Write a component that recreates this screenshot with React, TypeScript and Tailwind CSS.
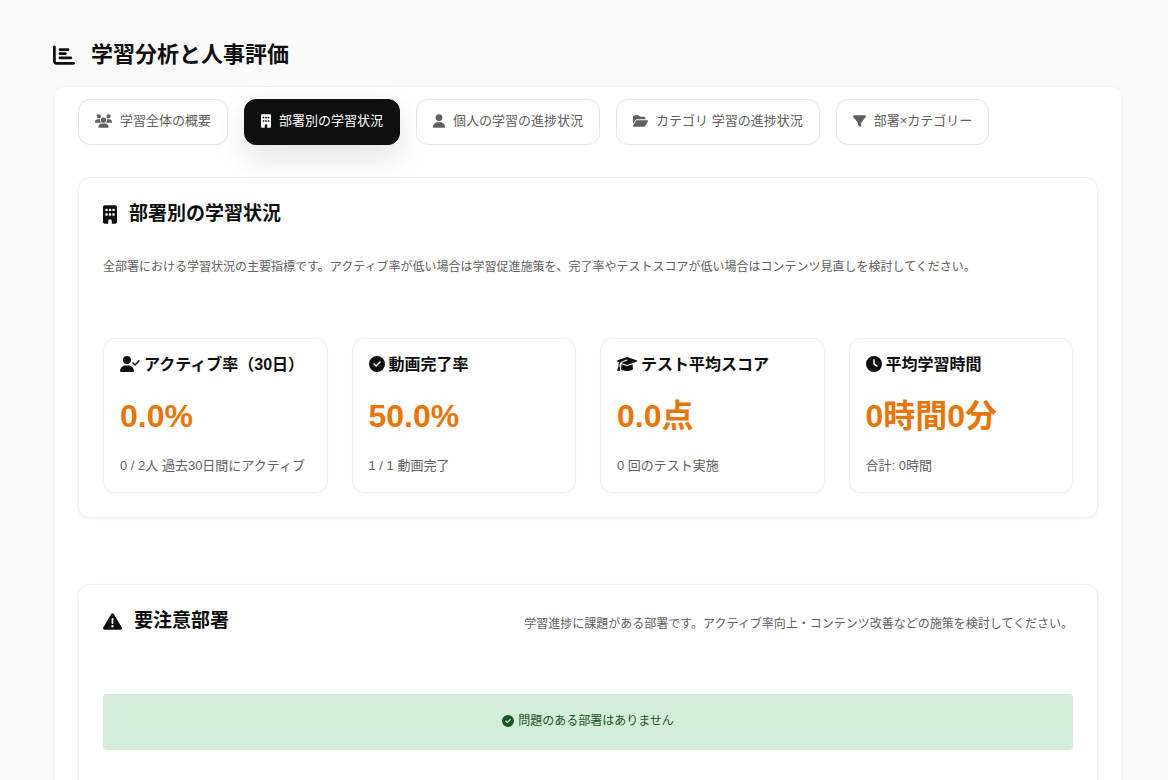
import React, { useState } from "react";
import type { IconType } from "react-icons";
import {
  FaBuilding,
  FaChartBar,
  FaCircleCheck,
  FaClock,
  FaFilter,
  FaFolderOpen,
  FaGraduationCap,
  FaTriangleExclamation,
  FaUser,
  FaUserCheck,
  FaUsers,
} from "react-icons/fa6";

interface Tab {
  id: string;
  label: string;
  icon: IconType;
  iconWidth: string;
}

interface Stat {
  title: string;
  value: string;
  note: string;
  icon: IconType;
  iconWidth: string;
}

const tabs: Tab[] = [
  { id: "overview", label: "学習全体の概要", icon: FaUsers, iconWidth: "w-[17px]" },
  { id: "department", label: "部署別の学習状況", icon: FaBuilding, iconWidth: "w-[10px]" },
  { id: "personal", label: "個人の学習の進捗状況", icon: FaUser, iconWidth: "w-3" },
  { id: "category", label: "カテゴリ 学習の進捗状況", icon: FaFolderOpen, iconWidth: "w-[15px]" },
  { id: "cross", label: "部署×カテゴリー", icon: FaFilter, iconWidth: "w-[13px]" },
];

const stats: Stat[] = [
  {
    title: "アクティブ率（30日）",
    value: "0.0%",
    note: "0 / 2人 過去30日間にアクティブ",
    icon: FaUserCheck,
    iconWidth: "w-5",
  },
  { title: "動画完了率", value: "50.0%", note: "1 / 1 動画完了", icon: FaCircleCheck, iconWidth: "w-4" },
  { title: "テスト平均スコア", value: "0.0点", note: "0 回のテスト実施", icon: FaGraduationCap, iconWidth: "w-5" },
  { title: "平均学習時間", value: "0時間0分", note: "合計: 0時間", icon: FaClock, iconWidth: "w-4" },
];

const StatCard: React.FC<Stat> = ({ title, value, note, icon: Icon, iconWidth }) => (
  <div className="rounded-xl border border-[#f0f0f0] bg-white p-4 shadow-[0_1px_2px_rgba(0,0,0,0.04)]">
    <h3 className="flex items-start gap-1 whitespace-nowrap text-base leading-5 font-bold">
      <Icon className={`mt-px h-4 shrink-0 ${iconWidth}`} />
      {title}
    </h3>
    <p className="mt-4 text-[32px] leading-[50px] font-bold text-[#e8750a]">{value}</p>
    <p className="mt-[15px] whitespace-nowrap text-[13px] leading-5 text-[#606060]">{note}</p>
  </div>
);

const App: React.FC = () => {
  const [active, setActive] = useState("department");

  return (
    <div
      lang="ja"
      className="min-h-screen bg-[#f9f9f9] pt-10 pr-[45px] pl-[53px] font-['Liberation_Sans','Noto_Sans_CJK_JP',sans-serif] text-[#0f0f0f]"
    >
      <h1 className="flex items-center gap-4 text-[22px] leading-[30px] font-bold">
        <FaChartBar className="size-[22px]" />
        学習分析と人事評価
      </h1>

      <main className="mt-4 rounded-xl border border-[#f0f0f0] bg-white px-6 pt-3 pb-6">
        <nav className="flex flex-wrap gap-4">
          {tabs.map(({ id, label, icon: Icon, iconWidth }) => (
            <button
              key={id}
              type="button"
              onClick={() => setActive(id)}
              className={`flex h-[46px] items-center gap-2 rounded-xl border px-4 pb-0.5 text-[13px] whitespace-nowrap ${
                active === id
                  ? "border-[#0f0f0f] bg-[#0f0f0f] text-white shadow-[0_12px_32px_rgba(15,15,15,0.12)]"
                  : "border-[#e5e5e5] bg-white text-[#606060]"
              }`}
            >
              <Icon className={`h-3.5 ${iconWidth}`} />
              {label}
            </button>
          ))}
        </nav>

        <section className="mt-8 rounded-xl border border-[#f0f0f0] bg-white p-6 shadow-[0_1px_3px_rgba(0,0,0,0.06)]">
          <h2 className="flex items-center gap-3 text-[19px] leading-6 font-bold">
            <FaBuilding className="h-[19px] w-3.5" />
            部署別の学習状況
          </h2>
          <p className="mt-8 text-xs leading-[18px] text-[#606060]">
            全部署における学習状況の主要指標です。アクティブ率が低い場合は学習促進施策を、完了率やテストスコアが低い場合はコンテンツ見直しを検討してください。
          </p>
          <div className="mt-[62px] grid grid-cols-4 gap-6">
            {stats.map((stat) => (
              <StatCard key={stat.title} {...stat} />
            ))}
          </div>
        </section>

        <section className="mt-[66px] rounded-xl border border-[#f0f0f0] bg-white p-6 shadow-[0_1px_3px_rgba(0,0,0,0.06)]">
          <div className="flex items-start justify-between">
            <h2 className="flex items-center gap-3 text-[19px] leading-6 font-bold">
              <FaTriangleExclamation className="size-[19px]" />
              要注意部署
            </h2>
            <p className="text-xs leading-[30px] text-[#606060]">
              学習進捗に課題がある部署です。アクティブ率向上・コンテンツ改善などの施策を検討してください。
            </p>
          </div>
          <div
            role="status"
            className="mt-[55px] mb-8 flex h-14 items-center justify-center gap-1 rounded-sm bg-[#d4edda] pb-0.5 text-xs text-[#155724]"
          >
            <FaCircleCheck className="size-3" />
            問題のある部署はありません
          </div>
        </section>
      </main>
    </div>
  );
};

export default App;
